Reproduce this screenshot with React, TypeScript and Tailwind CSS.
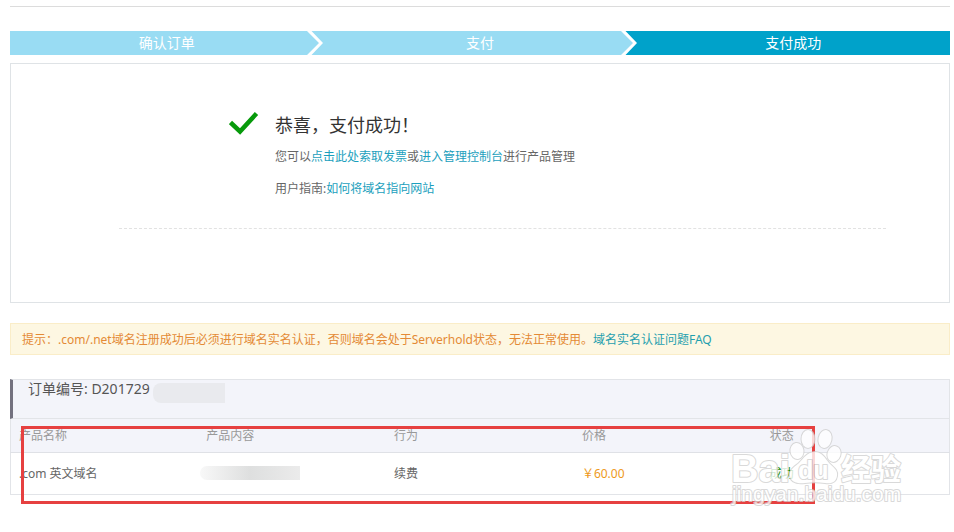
import React from 'react';

const steps = [
  { label: '确认订单', active: false },
  { label: '支付', active: false },
  { label: '支付成功', active: true },
];

const columns = ['产品名称', '产品内容', '行为', '价格', '状态'];

const StepArrow = ({ nextActive }: { nextActive: boolean }) => (
  <svg className="absolute right-0 top-0 h-6 w-4" viewBox="0 0 16 24" aria-hidden="true">
    <path d="M0 0H16V24H0Z" className={nextActive ? 'fill-[#00a2ca]' : 'fill-[#99dcf3]'} />
    <path d="M0 0H2L14 12L2 24H0Z" className="fill-[#99dcf3]" />
    <path d="M0 0H4.5L16 12L4.5 24H0L12 12Z" className="fill-white" />
  </svg>
);

const Steps = () => (
  <ol className="mt-6 grid grid-cols-3 text-sm leading-6 text-white">
    {steps.map((step, i) => (
      <li
        key={step.label}
        className={`relative h-6 text-center ${step.active ? 'bg-[#00a2ca]' : 'bg-[#99dcf3]'}`}
      >
        {step.label}
        {i < steps.length - 1 && <StepArrow nextActive={steps[i + 1].active} />}
      </li>
    ))}
  </ol>
);

const Result = () => (
  <section className="mt-2 h-60 border border-[#dfe3e6] pl-[108px] pr-[63px] pt-[47px]">
    <div className="flex gap-4 border-b border-dashed border-[#e2e2e2] pb-[27px] pl-[110px]">
      <svg className="h-7 w-[30px] shrink-0" viewBox="0 0 30 28" aria-hidden="true">
        <path d="M1.5 11.500L11 20.500L27.500 2.500" fill="none" stroke="#079a0b" strokeWidth="4.500" />
      </svg>
      <div className="text-xs leading-6 text-[#666]">
        <h1 className="text-lg leading-7 text-[#333]">恭喜，支付成功！</h1>
        <p className="mt-[6px]">
          您可以
          <a href="#invoice" className="text-[#1c9fbd]">点击此处索取发票</a>
          或
          <a href="#console" className="text-[#1c9fbd]">进入管理控制台</a>
          进行产品管理
        </p>
        <p className="mt-2">
          用户指南:
          <a href="#guide" className="text-[#1c9fbd]">如何将域名指向网站</a>
        </p>
      </div>
    </div>
  </section>
);

const Notice = () => (
  <p className="mt-5 border border-[#faedc8] bg-[#fdf7e2] px-[11px] pb-[2px] pt-1 text-xs leading-6 text-[#e48a35]">
    提示：.com/.net域名注册成功后必须进行域名实名认证，否则域名会处于Serverhold状态，无法正常使用。
    <a href="#faq" className="text-[#1f9fae]">域名实名认证问题FAQ</a>
  </p>
);

const Watermark = () => (
  <svg
    className="pointer-events-none absolute right-[42px] top-[46px] h-[85px] w-[180px] opacity-80"
    viewBox="728 425 180 85"
    aria-hidden="true"
  >
    <g fill="#fff" stroke="#d0d0d0" strokeWidth="2" strokeLinejoin="round" className="[paint-order:stroke]">
      <ellipse cx="797" cy="451" rx="6.500" ry="8" transform="rotate(-8 797 451)" />
      <ellipse cx="808" cy="439" rx="6.500" ry="9" />
      <ellipse cx="825" cy="439" rx="6.500" ry="9" transform="rotate(12 825 439)" />
      <ellipse cx="834" cy="454" rx="6.500" ry="8" transform="rotate(18 834 454)" />
      <path d="M815 452C822 452 825 458 829 463C834 468 838 470 837 476C836 482 832 484 825 483C818 482 812 482 805 483C797 484 791 482 790 476C789 470 793 468 799 463C804 458 807 452 815 452Z" />
      <text x="731" y="482" className="font-['Liberation_Sans'] text-[38px] font-bold">Bai</text>
      <text x="841" y="480" className="font-['Noto_Sans_CJK_SC'] text-[30px] font-bold">经验</text>
      <text x="732" y="501" className="font-['Liberation_Sans'] text-[21px]">jingyan.baidu.com</text>
      <text x="798" y="479" className="font-['Liberation_Sans'] text-[25px] font-bold">du</text>
    </g>
  </svg>
);

const Order = () => (
  <section className="relative mt-6">
    <h2 className="flex h-10 items-start border border-l-3 border-[#e2e4e8] border-l-[#73717f] bg-[#f3f4fa] pl-[15px] text-sm leading-[18px] text-[#555]">
      订单编号: D201729
      <span className="ml-[3px] mt-[3px] h-5 w-[72px] rounded-l-lg bg-[#e9eaee]" />
    </h2>
    <table className="w-full table-fixed border border-t-0 border-[#e2e4e8] text-left text-xs text-[#666]">
      <thead>
        <tr className="h-[33px] border-b border-[#dfe1e6] bg-[#f3f4fa] text-[#999]">
          {columns.map((name) => (
            <th key={name} className="px-2 pt-[2px] font-normal">{name}</th>
          ))}
        </tr>
      </thead>
      <tbody>
        <tr className="h-[42px]">
          <td className="px-2 pt-[2px]">.com 英文域名</td>
          <td className="px-[2px]">
            <span className="block h-[14px] w-[100px] rounded-l-lg bg-linear-to-r from-[#f8f8f8] via-[#dedfdf] to-[#ebebeb]" />
          </td>
          <td className="px-2 pt-[2px]">续费</td>
          <td className="px-2 pt-[2px] text-[#ee9a1c]">￥60.00</td>
          <td className="px-2 pt-[2px] text-[#0a8a0a]">成功</td>
        </tr>
      </tbody>
    </table>
    <div className="pointer-events-none absolute left-[11px] right-[135px] top-[47px] h-[78px] border-3 border-[#e64040]" />
    <Watermark />
  </section>
);

const App = () => {
  return (
    <main
      lang="zh-CN"
      className="min-h-screen bg-white pb-7 pl-[10px] pr-1 pt-[6px] font-['Noto_Sans','Noto_Sans_CJK_SC',sans-serif]"
    >
      <hr className="border-[#dcdcdc]" />
      <Steps />
      <Result />
      <Notice />
      <Order />
    </main>
  );
};

export default App;
